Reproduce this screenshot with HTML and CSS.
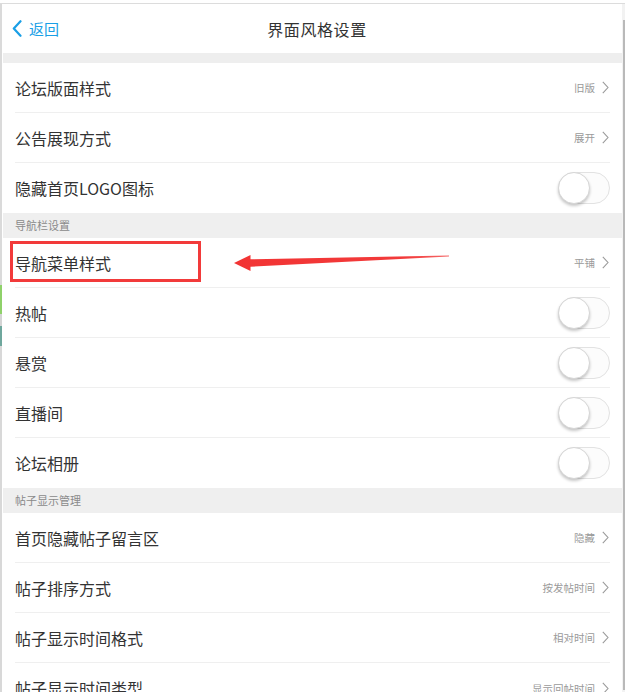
FILE: index.html
```html
<!DOCTYPE html>
<html lang="zh-CN">
<head>
<meta charset="utf-8">
<title>界面风格设置</title>
<link rel="stylesheet" href="styles.css">
</head>
<body>
<div class="screen">
  <div class="edge-left">
    <div class="edge-seg edge-gray-a"></div>
    <div class="edge-seg edge-green"></div>
    <div class="edge-seg edge-gray-b"></div>
    <div class="edge-seg edge-teal"></div>
    <div class="edge-seg edge-gray-c"></div>
  </div>

  <main class="page">
    <header class="topbar">
      <a class="back" href="#">
        <svg class="back-icon" width="10" height="17" viewBox="0 0 10 17"><path d="M8.5 1.2 L1.8 8.5 L8.5 15.8" fill="none" stroke="#1a9fe6" stroke-width="2.2" stroke-linecap="round" stroke-linejoin="round"/></svg>
        <span>返回</span>
      </a>
      <h1 class="title">界面风格设置</h1>
      <span class="spacer"></span>
    </header>

    <div class="gap"></div>

    <ul class="group">
      <li class="row"><span class="label">论坛版面样式</span><span class="value">旧版</span><svg class="chev" width="7" height="13" viewBox="0 0 7 13"><path d="M0.8 0.8 L6 6.5 L0.8 12.2" fill="none" stroke="#9a9a9a" stroke-width="1.1"/></svg></li>
      <li class="row"><span class="label">公告展现方式</span><span class="value">展开</span><svg class="chev" width="7" height="13" viewBox="0 0 7 13"><path d="M0.8 0.8 L6 6.5 L0.8 12.2" fill="none" stroke="#9a9a9a" stroke-width="1.1"/></svg></li>
      <li class="row"><span class="label">隐藏首页LOGO图标</span><span class="toggle"><span class="knob"></span></span></li>
    </ul>

    <div class="section-title">导航栏设置</div>

    <ul class="group">
      <li class="row"><span class="label">导航菜单样式</span><span class="value">平铺</span><svg class="chev" width="7" height="13" viewBox="0 0 7 13"><path d="M0.8 0.8 L6 6.5 L0.8 12.2" fill="none" stroke="#9a9a9a" stroke-width="1.1"/></svg></li>
      <li class="row"><span class="label">热帖</span><span class="toggle"><span class="knob"></span></span></li>
      <li class="row"><span class="label">悬赏</span><span class="toggle"><span class="knob"></span></span></li>
      <li class="row"><span class="label">直播间</span><span class="toggle"><span class="knob"></span></span></li>
      <li class="row"><span class="label">论坛相册</span><span class="toggle"><span class="knob"></span></span></li>
    </ul>

    <div class="section-title">帖子显示管理</div>

    <ul class="group">
      <li class="row"><span class="label">首页隐藏帖子留言区</span><span class="value">隐藏</span><svg class="chev" width="7" height="13" viewBox="0 0 7 13"><path d="M0.8 0.8 L6 6.5 L0.8 12.2" fill="none" stroke="#9a9a9a" stroke-width="1.1"/></svg></li>
      <li class="row"><span class="label">帖子排序方式</span><span class="value">按发帖时间</span><svg class="chev" width="7" height="13" viewBox="0 0 7 13"><path d="M0.8 0.8 L6 6.5 L0.8 12.2" fill="none" stroke="#9a9a9a" stroke-width="1.1"/></svg></li>
      <li class="row"><span class="label">帖子显示时间格式</span><span class="value">相对时间</span><svg class="chev" width="7" height="13" viewBox="0 0 7 13"><path d="M0.8 0.8 L6 6.5 L0.8 12.2" fill="none" stroke="#9a9a9a" stroke-width="1.1"/></svg></li>
      <li class="row"><span class="label">帖子显示时间类型</span><span class="value">显示回帖时间</span><svg class="chev" width="7" height="13" viewBox="0 0 7 13"><path d="M0.8 0.8 L6 6.5 L0.8 12.2" fill="none" stroke="#9a9a9a" stroke-width="1.1"/></svg></li>
    </ul>
  </main>

  <div class="edge-right"><div class="scroll-line"></div></div>

  <div class="highlight-box"></div>
  <svg class="arrow" width="230" height="30" viewBox="230 250 230 30">
    <defs>
      <linearGradient id="fade" x1="0" y1="0" x2="1" y2="0">
        <stop offset="0" stop-color="#f23434"/>
        <stop offset="0.8" stop-color="#f23a3a"/>
        <stop offset="1" stop-color="#f56a6a"/>
      </linearGradient>
    </defs>
    <path d="M234 263 L250.5 255 L250.5 259.2 L449 255.4 L449 256.6 L250.5 266.8 L250.5 271 Z" fill="url(#fade)"/>
  </svg>
</div>
</body>
</html>
```

FILE: styles.css
```css
* { box-sizing: border-box; }

html, body {
  margin: 0;
  padding: 0;
  background: #ffffff;
}

body {
  font-family: "Noto Sans CJK SC", "Noto Sans", sans-serif;
  color: #333333;
  padding-top: 3px;
  overflow: hidden;
}

.screen {
  position: relative;
  display: flex;
  width: 625px;
  height: 689px;
  border-top: 1px solid #dcdcdc;
  overflow: hidden;
}

/* left edge strip */
.edge-left {
  width: 3px;
  flex: 0 0 3px;
  display: flex;
  flex-direction: column;
  background: #ffffff;
}
.edge-seg { width: 2px; }
.edge-gray-a { height: 281px; background: #dadada; }
.edge-green { height: 29px; background: #8fd16a; }
.edge-gray-b { height: 12px; background: #d4d4d4; }
.edge-teal { height: 20px; background: #6fa79d; }
.edge-gray-c { flex: 1; background: #d8d8d8; }

/* right edge strip */
.edge-right {
  width: 3px;
  flex: 0 0 3px;
  background: #f2f2f2;
  padding-top: 16px;
  display: flex;
  justify-content: center;
}
.scroll-line {
  width: 2px;
  height: 670px;
  background: #b9b9b9;
}

.page {
  flex: 1;
  min-width: 0;
  background: #ffffff;
}

/* header */
.topbar {
  height: 49px;
  display: grid;
  grid-template-columns: 1fr auto 1fr;
  align-items: center;
  padding-left: 9px;
}
.back {
  display: flex;
  align-items: center;
  gap: 7px;
  color: #1a9fe6;
  text-decoration: none;
  font-size: 15px;
  justify-self: start;
}
.back-icon { display: block; }
.title {
  margin: 0;
  font-size: 16px;
  font-weight: normal;
  color: #333333;
  letter-spacing: 0.6px;
}

.gap {
  height: 10px;
  background: #eeeeee;
}

/* groups */
.group {
  list-style: none;
  margin: 0;
  padding: 0;
}
.row {
  height: 50px;
  margin: 0 12px;
  display: flex;
  align-items: center;
  border-bottom: 1px solid #efefef;
}
.row:last-child { border-bottom: none; }
.label {
  flex: 1;
  font-size: 16px;
  color: #333333;
}
.value {
  font-size: 10.5px;
  color: #9a9a9a;
  margin-right: 7px;
}
.chev {
  display: block;
  margin-right: 1px;
}

/* toggle */
.toggle {
  position: relative;
  width: 52px;
  height: 32px;
  border: 1px solid #e2e2e2;
  border-radius: 16px;
  background: #fcfcfc;
}
.knob {
  position: absolute;
  left: -1px;
  top: -1px;
  width: 32px;
  height: 32px;
  border-radius: 50%;
  background: #ffffff;
  border: 1px solid #d6d6d6;
  box-shadow: 0 2px 3px rgba(0, 0, 0, 0.22);
}

/* section title */
.section-title {
  height: 25px;
  line-height: 25px;
  padding-left: 12px;
  background: #efefef;
  font-size: 11px;
  color: #8a8a8a;
}

/* annotation overlay */
.highlight-box {
  position: absolute;
  left: 10px;
  top: 237px;
  width: 191px;
  height: 41px;
  border: 3px solid #f23a3a;
}
.arrow {
  position: absolute;
  left: 230px;
  top: 246px;
}
```
